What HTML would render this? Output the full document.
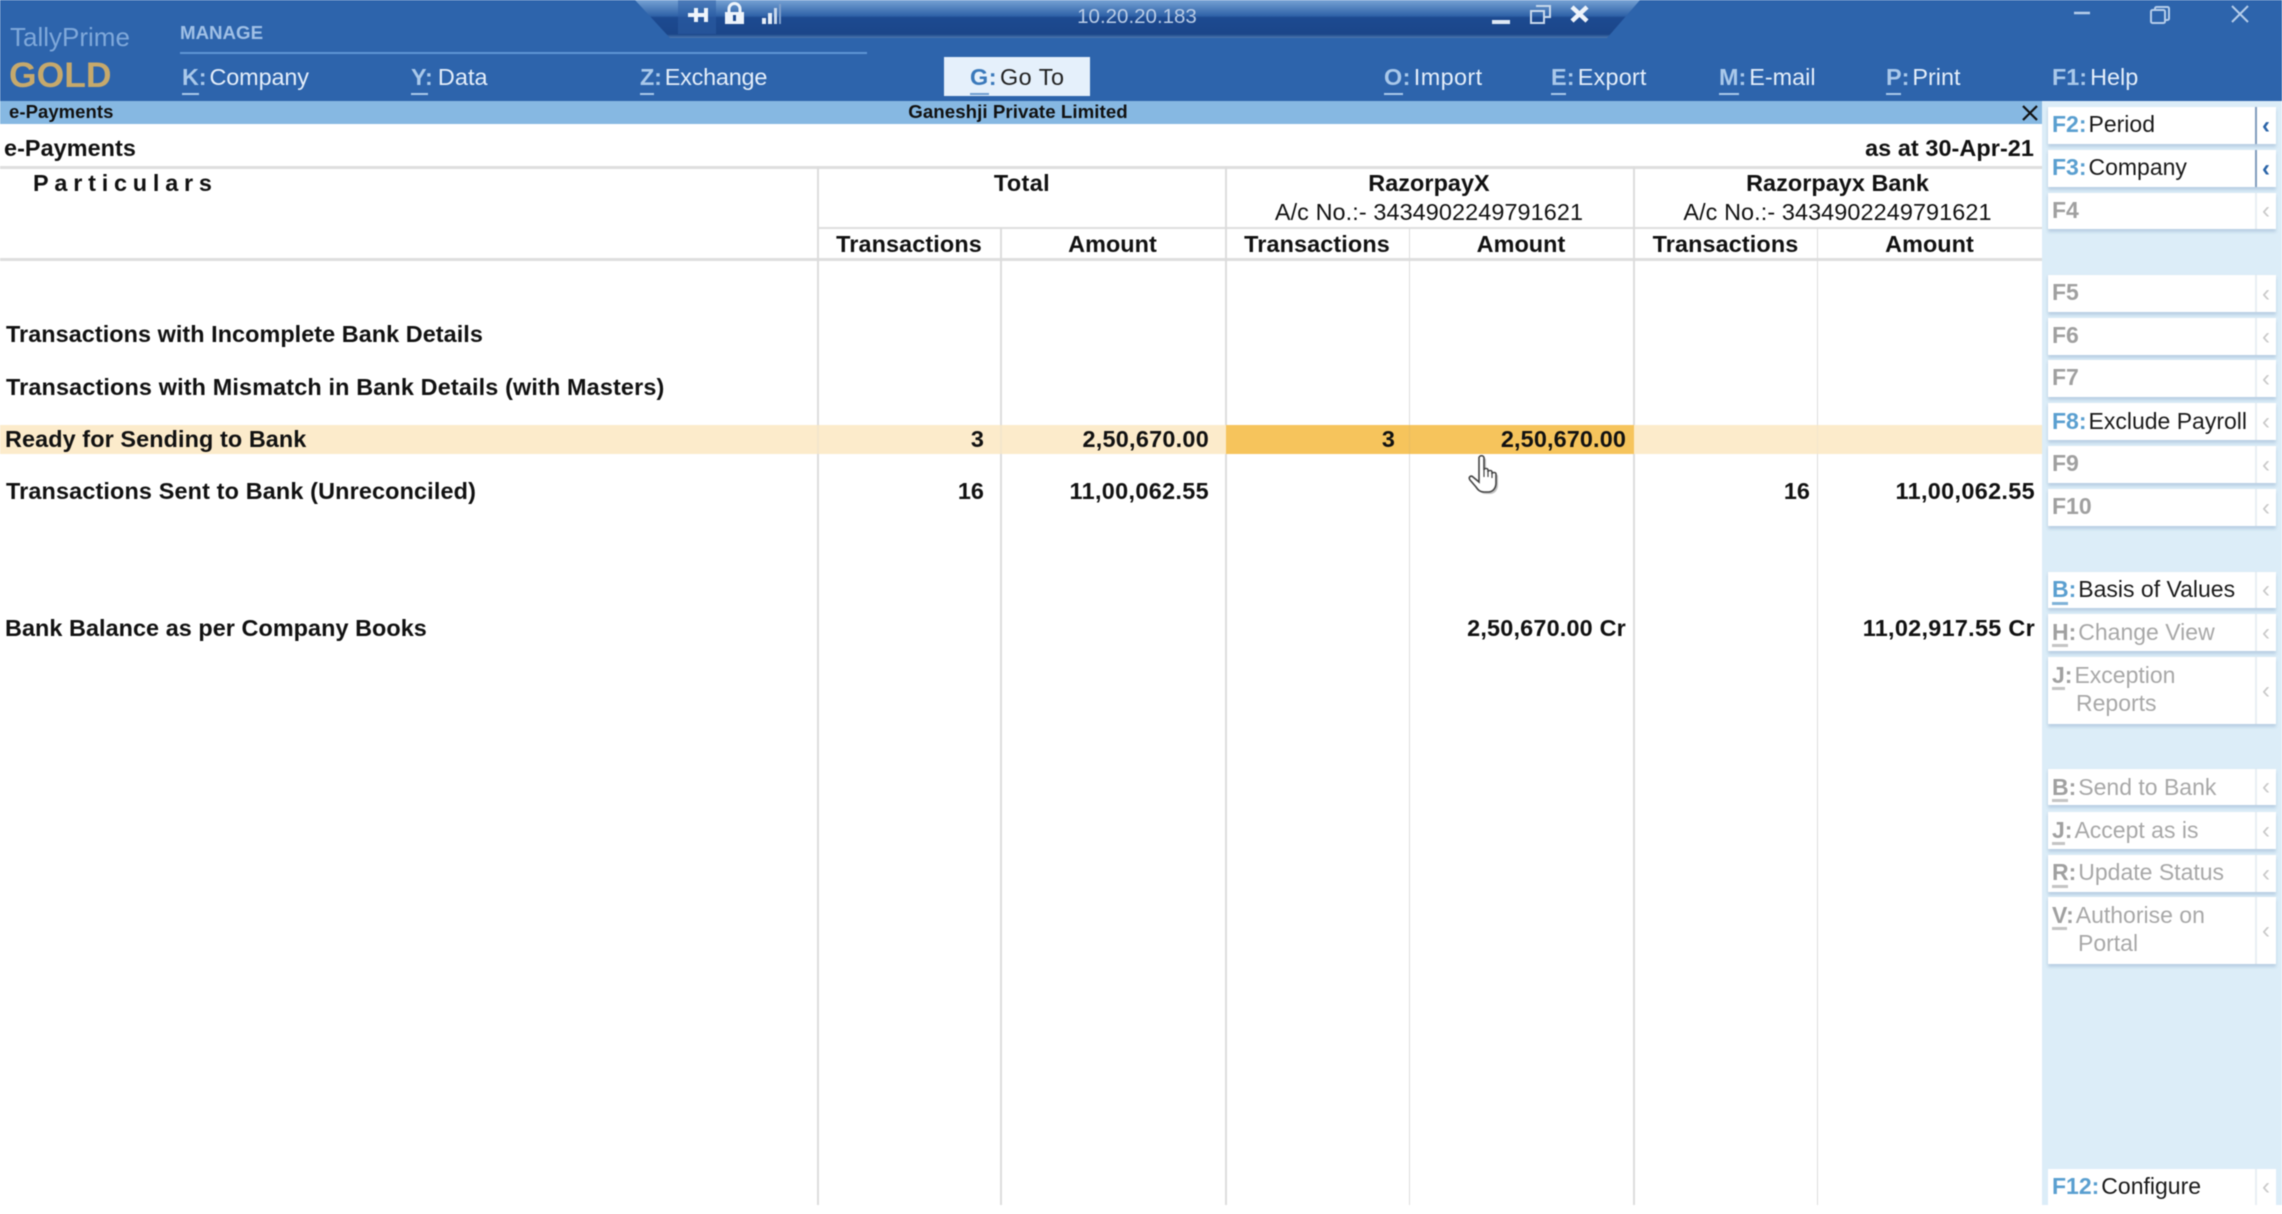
<!DOCTYPE html>
<html><head><meta charset="utf-8"><title>e-Payments</title>
<style>
html,body{margin:0;padding:0;background:#fff}
#p{position:relative;width:2282px;height:1214px;overflow:hidden;background:#fff;font-family:"Liberation Sans",sans-serif;filter:blur(.5px)}
#p div,#p span.a{position:absolute;white-space:nowrap}
.b{font-weight:bold;color:#111;font-size:23.4px;line-height:30px;letter-spacing:.06px}
.t2{letter-spacing:.15px}
.n{letter-spacing:.27px}
.r{text-align:right}.c{text-align:center}
.m{font-size:23.4px;line-height:30px;color:#e4eefa;top:62px}
.m b{color:#a9c8ea;font-weight:bold;margin-right:3px}
.u{height:2px;top:93px;background:#a9c8ea}
.v{width:1.5px;background:#dcdcdc}
.h{height:3px;background:#dedede}
.s{left:2048px;width:228px;background:#fff;box-shadow:0 3px 3px #b9cfe3,-1px 0 1px #d5e4f0}
.s .d{left:207px;top:0;bottom:0;width:2px;background:#e8eef3}
.s .t{left:4px;top:3px;font-size:23px;line-height:28.5px;color:#a8a8a8}
.s .t b{font-weight:bold;color:#a0a0a0;margin-right:2px}
.s.on .t{color:#1a1a1a}.s.on .t b{color:#5a9fd0}
.s .l{left:208px;top:50%;margin-top:-14px;width:20px;text-align:center;font-size:24px;line-height:28px;color:#c9c9c9}
.s.act .d{background:#7f9cbd}.s.act .l{color:#2a64a8;font-weight:bold}
.s .uu{left:4px;height:3px;top:30px;background:#c4c4c4}
.s.on .uu{background:#7fb2d8}
</style></head><body><div id="p">
<!-- header -->
<div style="left:0;top:0;width:2282px;height:101px;background:#2d64ac"></div>
<svg style="position:absolute;left:0;top:0" width="2282" height="101">
<defs><linearGradient id="g" x1="0" y1="0" x2="0" y2="1">
<stop offset="0" stop-color="#76a2d4"/><stop offset=".42" stop-color="#2f62a8"/><stop offset=".46" stop-color="#1d4a91"/><stop offset=".9" stop-color="#1b4689"/><stop offset="1" stop-color="#4f79b0"/></linearGradient></defs>
<path d="M635 0H1640L1607 38H670Z" fill="url(#g)"/>
<rect x="678" y="0" width="38" height="34" fill="#2d5ea6" opacity=".55"/>
<path d="M688 15H706M696 8V22M706 8V22" stroke="#eef4fb" stroke-width="4" fill="none"/>
<path d="M729 13V9a5.500 5.500 0 0 1 11 0v4" stroke="#eef4fb" stroke-width="3" fill="none"/>
<rect x="725" y="12" width="19" height="12" fill="#eef4fb"/><rect x="733" y="15" width="3" height="6" fill="#1d4a91"/>
<rect x="762" y="18" width="4" height="6" fill="#e6eef8"/><rect x="768" y="13" width="4" height="11" fill="#e6eef8"/><rect x="774" y="8" width="3" height="16" fill="#c8d8ec"/><rect x="779" y="4" width="2" height="20" fill="#7f9fca"/>
<rect x="1492" y="20" width="18" height="4" fill="#dfe9f5"/>
<path d="M1536 6H1550V17H1544" stroke="#c9d9ec" stroke-width="2" fill="none"/><rect x="1531" y="11" width="13" height="12" stroke="#c9d9ec" stroke-width="2" fill="none"/>
<path d="M1572 7L1587 21M1587 7L1572 21" stroke="#eef4fb" stroke-width="4.500" fill="none"/>
<path d="M2074 13H2090" stroke="#b5cdea" stroke-width="2.500"/>
<rect x="2155" y="7" width="14" height="13" rx="1.500" stroke="#b5cdea" stroke-width="2" fill="none"/><rect x="2151" y="10" width="14" height="13" rx="1.500" fill="#2d64ac" stroke="#b5cdea" stroke-width="2"/>
<path d="M2232 6L2248 22M2248 6L2232 22" stroke="#b5cdea" stroke-width="2" fill="none"/>
</svg>
<div style="left:1037px;width:200px;top:5px;line-height:24px;font-size:20.500px;color:#b9cce6;text-align:center">10.20.20.183</div>
<div style="left:10px;top:21px;line-height:32px;font-size:26px;color:#7fa8da">TallyPrime</div>
<div style="left:9px;top:53px;line-height:44px;font-size:35.500px;font-weight:bold;color:#c6a96c">GOLD</div>
<div style="left:180px;top:21px;line-height:24px;font-size:18.700px;font-weight:bold;color:#a0c0e6">MANAGE</div>
<div style="left:180px;top:52px;width:687px;height:2px;background:#5f95d5"></div>
<div class="m" style="left:182px;letter-spacing:-.1px"><b>K:</b>Company</div><div class="u" style="left:182px;width:17px"></div>
<div class="m" style="left:411px;letter-spacing:.1px"><b style="margin-right:5px">Y:</b>Data</div><div class="u" style="left:411px;width:17px"></div>
<div class="m" style="left:640px;letter-spacing:-.2px"><b>Z:</b>Exchange</div><div class="u" style="left:640px;width:14px"></div>
<div style="left:944px;top:57px;width:146px;height:39px;background:#e5f0fb"></div>
<div class="m" style="left:970px;color:#222;letter-spacing:.5px"><b style="color:#3a79bb">G:</b>Go To</div><div class="u" style="left:970px;width:19px;background:#6d9cd0"></div>
<div class="m" style="left:1384px;letter-spacing:.4px"><b>O:</b>Import</div><div class="u" style="left:1384px;width:19px"></div>
<div class="m" style="left:1551px;letter-spacing:.2px"><b>E:</b>Export</div><div class="u" style="left:1551px;width:15px"></div>
<div class="m" style="left:1719px"><b>M:</b>E-mail</div><div class="u" style="left:1719px;width:20px"></div>
<div class="m" style="left:1886px"><b>P:</b>Print</div><div class="u" style="left:1886px;width:15px"></div>
<div class="m" style="left:2052px"><b>F1:</b>Help</div>
<!-- band -->
<div style="left:0;top:101px;width:2043px;height:23px;background:#86b8e2"></div>
<div class="b" style="left:9px;top:97px;font-size:18.500px">e-Payments</div>
<div class="b c" style="left:817px;width:402px;top:97px;font-size:18.700px">Ganeshji Private Limited</div>
<svg style="position:absolute;left:2020px;top:104px" width="20" height="18"><path d="M3 2L17 16M17 2L3 16" stroke="#111" stroke-width="2.200"/></svg>
<!-- sidebar -->
<div style="left:2042px;top:101px;width:240px;height:1104px;background:#dcedf8"></div>
<!-- table lines -->
<div class="h" style="left:0;top:166px;width:2042px"></div>
<div class="h" style="left:817px;top:227px;width:1225px;height:2px"></div>
<div class="h" style="left:0;top:258px;width:2042px"></div>
<div class="v" style="left:817px;top:167px;height:1038px"></div>
<div class="v" style="left:1000px;top:228px;height:977px"></div>
<div class="v" style="left:1225px;top:167px;height:1038px"></div>
<div class="v" style="left:1408.500px;top:228px;height:977px"></div>
<div class="v" style="left:1633px;top:167px;height:1038px"></div>
<div class="v" style="left:1816.500px;top:228px;height:977px"></div>
<!-- highlight -->
<div style="left:0;top:425px;width:2042px;height:29px;background:#fcebcb"></div>
<div style="left:1226px;top:425px;width:408px;height:29px;background:#f6c45c"></div>
<div class="v" style="left:817px;top:425px;height:29px;background:#f3e6cc"></div>
<div class="v" style="left:1000px;top:425px;height:29px;background:#f3e6cc"></div>
<div class="v" style="left:1408.500px;top:425px;height:29px;background:#e8bd62"></div>
<div class="v" style="left:1816.500px;top:425px;height:29px;background:#f3e6cc"></div>
<!-- headings -->
<div class="b" style="left:4px;top:133px">e-Payments</div>
<div class="b r" style="right:248px;top:133px;letter-spacing:.08px">as at 30-Apr-21</div>
<div class="b" style="left:33px;top:168px;letter-spacing:5.800px">Particulars</div>
<div class="b c" style="left:818px;width:408px;top:168px;letter-spacing:.4px">Total</div>
<div class="b c" style="left:1225px;width:408px;top:168px">RazorpayX</div>
<div class="b c" style="left:1633px;width:409px;top:168px">Razorpayx Bank</div>
<div class="b c" style="left:1225px;width:408px;top:197px;font-weight:normal;letter-spacing:.1px">A/c No.:- 3434902249791621</div>
<div class="b c" style="left:1633px;width:409px;top:197px;font-weight:normal;letter-spacing:.1px">A/c No.:- 3434902249791621</div>
<div class="b c" style="left:817px;width:184px;top:229px;letter-spacing:.12px">Transactions</div>
<div class="b c" style="left:1000px;width:225px;top:229px">Amount</div>
<div class="b c" style="left:1225px;width:184px;top:229px;letter-spacing:.12px">Transactions</div>
<div class="b c" style="left:1409px;width:224px;top:229px">Amount</div>
<div class="b c" style="left:1633px;width:185px;top:229px;letter-spacing:.12px">Transactions</div>
<div class="b c" style="left:1817px;width:225px;top:229px">Amount</div>
<!-- rows -->
<div class="b" style="left:6px;top:319px">Transactions with Incomplete Bank Details</div>
<div class="b t2" style="left:6px;top:372px">Transactions with Mismatch in Bank Details (with Masters)</div>
<div class="b" style="left:5px;top:424px;letter-spacing:.1px">Ready for Sending to Bank</div>
<div class="b r" style="right:1298px;top:424px">3</div>
<div class="b r n" style="right:1073px;top:424px">2,50,670.00</div>
<div class="b r" style="right:887px;top:424px">3</div>
<div class="b r n" style="right:656px;top:424px;letter-spacing:.14px">2,50,670.00</div>
<div class="b t2" style="left:6px;top:476px">Transactions Sent to Bank (Unreconciled)</div>
<div class="b r" style="right:1298px;top:476px">16</div>
<div class="b r n" style="right:1073px;top:476px;letter-spacing:.35px">11,00,062.55</div>
<div class="b r" style="right:472px;top:476px">16</div>
<div class="b r n" style="right:247px;top:476px;letter-spacing:.35px">11,00,062.55</div>
<div class="b" style="left:5px;top:613px;letter-spacing:.06px">Bank Balance as per Company Books</div>
<div class="b r n" style="right:656px;top:613px;letter-spacing:.2px">2,50,670.00 Cr</div>
<div class="b r n" style="right:247px;top:613px;letter-spacing:.3px">11,02,917.55 Cr</div>
<!-- hand -->
<svg style="position:absolute;left:1467px;top:454px" width="36" height="42" viewBox="0 0 36 42">
<path d="M12 4c0-3 5-3 5 0v12c0-2 4-2 4 0v2c0-2 4-2 4 0v2c0-2 4-2 4 0v9c0 5-3 9-8 9h-4c-4 0-6-2-8-5l-6-7c-2-3 1-5 3-3l6 5z" fill="#777" opacity=".45" transform="translate(2 2)"/>
<path d="M12 4c0-3 5-3 5 0v12c0-2 4-2 4 0v2c0-2 4-2 4 0v2c0-2 4-2 4 0v9c0 5-3 9-8 9h-4c-4 0-6-2-8-5l-6-7c-2-3 1-5 3-3l6 5z" fill="#fff" stroke="#444" stroke-width="1.600"/>
<path d="M17 16v7M21 18v5M25 20v4" stroke="#444" stroke-width="1.200" fill="none"/>
</svg>
<!-- sidebar buttons -->
<div class="s on act" style="top:107px;height:37px"><div class="t"><b style="color:#5a9fd0">F2:</b>Period</div><div class="d"></div><div class="l">‹</div></div>
<div class="s on act" style="top:150px;height:37px"><div class="t"><b>F3:</b>Company</div><div class="d"></div><div class="l">‹</div></div>
<div class="s" style="top:193px;height:36px"><div class="t"><b>F4</b></div><div class="d"></div><div class="l">‹</div></div>
<div class="s" style="top:275px;height:37px"><div class="t"><b>F5</b></div><div class="d"></div><div class="l">‹</div></div>
<div class="s" style="top:318px;height:37px"><div class="t"><b>F6</b></div><div class="d"></div><div class="l">‹</div></div>
<div class="s" style="top:360px;height:37px"><div class="t"><b>F7</b></div><div class="d"></div><div class="l">‹</div></div>
<div class="s on" style="top:403px;height:37px"><div class="t" style="top:4px"><b>F8:</b>Exclude Payroll</div><div class="d"></div><div class="l">‹</div></div>
<div class="s" style="top:446px;height:37px"><div class="t"><b>F9</b></div><div class="d"></div><div class="l">‹</div></div>
<div class="s" style="top:489px;height:37px"><div class="t"><b>F10</b></div><div class="d"></div><div class="l">‹</div></div>
<div class="s on" style="top:572px;height:36px"><div class="t"><b>B:</b>Basis of Values</div><div class="uu" style="width:16px"></div><div class="d"></div><div class="l">‹</div></div>
<div class="s" style="top:614px;height:37px"><div class="t" style="top:4px"><b>H:</b>Change View</div><div class="uu" style="width:16px"></div><div class="d"></div><div class="l">‹</div></div>
<div class="s" style="top:657px;height:67px"><div class="t" style="top:4px"><b>J:</b>Exception</div><div class="t" style="left:28px;top:32px">Reports</div><div class="uu" style="width:13px"></div><div class="d"></div><div class="l">‹</div></div>
<div class="s" style="top:769px;height:36px"><div class="t" style="top:3.500px"><b>B:</b>Send to Bank</div><div class="uu" style="width:16px"></div><div class="d"></div><div class="l">‹</div></div>
<div class="s" style="top:812px;height:37px"><div class="t" style="top:3.500px"><b>J:</b>Accept as is</div><div class="uu" style="width:13px"></div><div class="d"></div><div class="l">‹</div></div>
<div class="s" style="top:855px;height:37px"><div class="t"><b>R:</b>Update Status</div><div class="uu" style="width:16px"></div><div class="d"></div><div class="l">‹</div></div>
<div class="s" style="top:897px;height:67px"><div class="t" style="top:4px"><b>V:</b>Authorise on</div><div class="t" style="left:30px;top:32px">Portal</div><div class="uu" style="width:15px"></div><div class="d"></div><div class="l">‹</div></div>
<div class="s on" style="top:1169px;height:36px;box-shadow:none"><div class="t"><b>F12:</b>Configure</div><div class="d"></div><div class="l">‹</div></div>
</div></body></html>
